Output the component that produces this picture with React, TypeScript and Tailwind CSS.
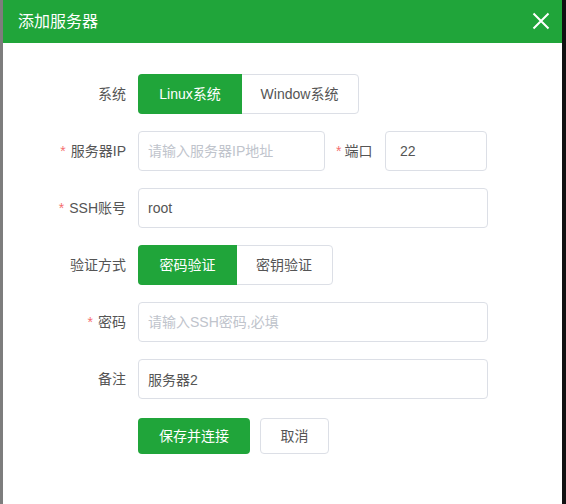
import React, { useState } from "react";

const font = { fontFamily: '"Liberation Sans", "Noto Sans CJK SC", sans-serif' };

const Label = ({ text, required }: { text: string; required?: boolean }) => (
  <div className="w-[123px] shrink-0 pr-0 text-right text-[14px] text-[#555]">
    {required && <span className="mr-[5px] text-[#ef0808] opacity-60">*</span>}
    {text}
  </div>
);

const Input = ({
  value,
  placeholder,
  className,
}: {
  value?: string;
  placeholder?: string;
  className: string;
}) => (
  <input
    type="text"
    defaultValue={value}
    placeholder={placeholder}
    className={`h-[40px] rounded-[4px] border border-[#dcdfe6] px-[9px] text-[14px] text-[#555] outline-none placeholder:text-[#c0c4cc] ${className}`}
    style={font}
  />
);

const Toggle = ({
  options,
  widths,
}: {
  options: string[];
  widths: string[];
}) => {
  const [active, setActive] = useState(0);
  return (
    <div className="flex h-[40px] rounded-[4px] border border-[#dcdfe6]">
      {options.map((o, i) => (
        <button
          key={o}
          onClick={() => setActive(i)}
          className={`${widths[i]} -m-px flex items-center justify-center text-[14px] ${
            i === 0 ? "rounded-l-[4px]" : "rounded-r-[4px]"
          } ${active === i ? "bg-[#20a53a] text-white" : "text-[#555]"}`}
        >
          {o}
        </button>
      ))}
    </div>
  );
};

export default function App() {
  return (
    <div className="flex h-[504px] w-[566px] overflow-hidden bg-[#111]" style={font}>
      <div className="w-[3px] shrink-0 bg-[#7d7d7d]" />
      <div className="flex w-[559px] shrink-0 flex-col bg-white">
        {/* header */}
        <div className="flex h-[43px] shrink-0 items-center justify-between bg-[#20a53a] pl-[15px] pr-[12px]">
          <span className="text-[16px] text-white">添加服务器</span>
          <svg width="18" height="18" viewBox="0 0 18 18" className="mt-[-1px]">
            <path d="M1.5 1.5 L16.5 16.5 M16.5 1.5 L1.5 16.5" stroke="white" strokeWidth="2" />
          </svg>
        </div>

        {/* form */}
        <div className="flex flex-col gap-[17px] pt-[31px]">
          <div className="flex items-center gap-[12px]">
            <Label text="系统" />
            <Toggle options={["Linux系统", "Window系统"]} widths={["w-[104px]", "w-[119px]"]} />
          </div>

          <div className="flex items-center gap-[12px]">
            <Label text="服务器IP" required />
            <Input placeholder="请输入服务器IP地址" className="w-[187px]" />
            <div className="ml-[-1px] w-[37px] shrink-0 whitespace-nowrap text-[14px] text-[#555]">
              <span className="mr-[3px] text-[#ef0808] opacity-60">*</span>端口
            </div>
            <Input value="22" className="w-[102px] pl-[14px]" />
          </div>

          <div className="flex items-center gap-[12px]">
            <Label text="SSH账号" required />
            <Input value="root" className="w-[350px]" />
          </div>

          <div className="flex items-center gap-[12px]">
            <Label text="验证方式" />
            <Toggle options={["密码验证", "密钥验证"]} widths={["w-[99px]", "w-[98px]"]} />
          </div>

          <div className="flex items-center gap-[12px]">
            <Label text="密码" required />
            <Input placeholder="请输入SSH密码,必填" className="w-[350px]" />
          </div>

          <div className="flex items-center gap-[12px]">
            <Label text="备注" />
            <Input value="服务器2" className="w-[350px]" />
          </div>

          <div className="mt-[2px] flex items-center gap-[10px] pl-[135px]">
            <button className="h-[36px] w-[112px] rounded-[4px] bg-[#20a53a] text-[14px] text-white">
              保存并连接
            </button>
            <button className="h-[36px] w-[69px] rounded-[4px] border border-[#dcdfe6] bg-white text-[14px] text-[#555]">
              取消
            </button>
          </div>
        </div>
      </div>
    </div>
  );
}
